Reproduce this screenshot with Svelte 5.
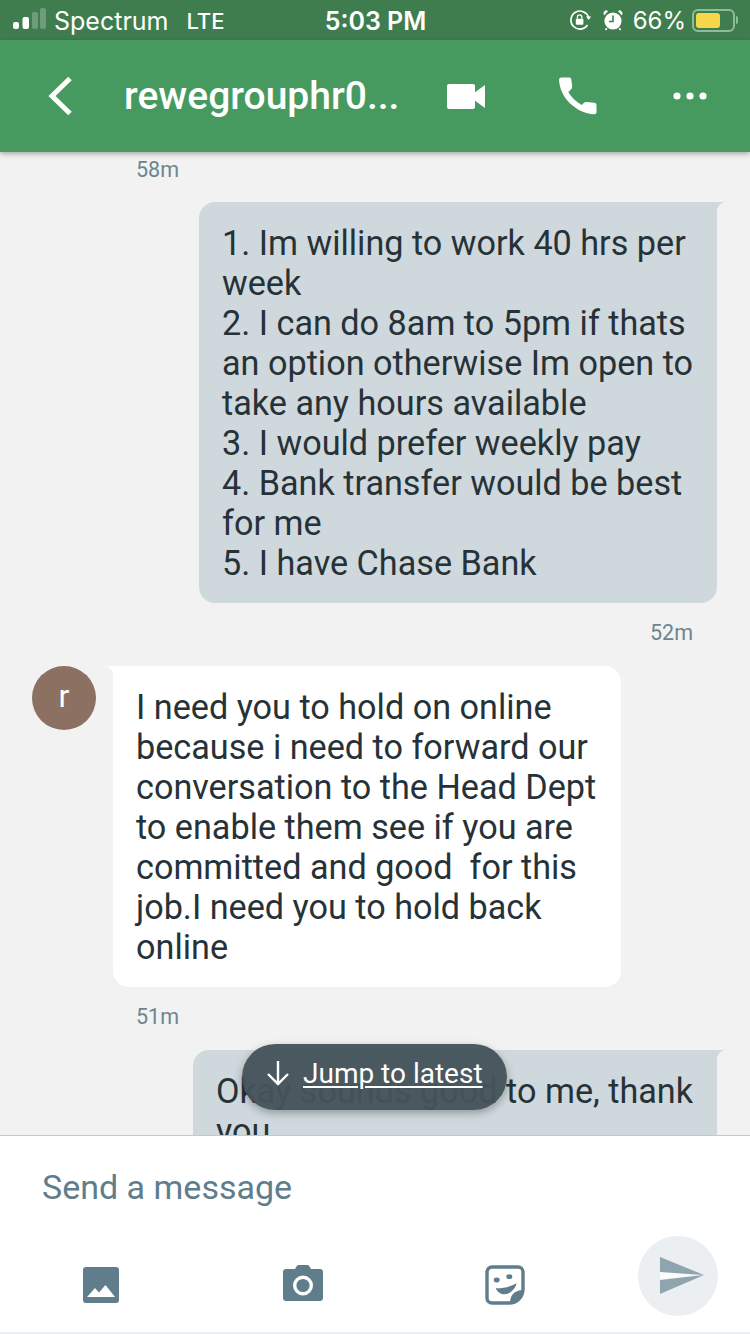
<script>
  const outgoingFirst =
    '1. Im willing to work 40 hrs per week\n2. I can do 8am to 5pm if thats an option otherwise Im open to take any hours available\n3. I would prefer weekly pay\n4. Bank transfer would be best for me\n5. I have Chase Bank';
  const incoming =
    'I need you to hold on online because i need to forward our conversation to the Head Dept to enable them see if you are committed and good  for this job.I need you to hold back online';
  const outgoingLast = 'Okay sounds good to me, thank you';
</script>

<div class="screen">
  <div class="status">
    <div class="status-left">
      <svg class="signal" width="34" height="24" viewBox="0 0 34 24">
        <rect x="0" y="14" width="6" height="7" rx="2" fill="#fff" />
        <rect x="9.5" y="9" width="6.5" height="12" rx="2" fill="#fff" />
        <rect x="19" y="4" width="6" height="17" rx="2" fill="#fff" opacity="0.25" />
        <rect x="27" y="0" width="6" height="21" rx="2" fill="#fff" opacity="0.25" />
      </svg>
      <span class="carrier">Spectrum</span>
      <span class="net">LTE</span>
    </div>
    <div class="clock">5:03 PM</div>
    <div class="status-right">
      <svg width="22" height="22" viewBox="0 0 22 22" fill="none">
        <path d="M18.5 16A9 9 0 1 1 19.6 8.5" stroke="#fff" stroke-width="1.7" />
        <path d="M17 7.5h5.2l-2.6 3.4z" fill="#fff" />
        <rect x="6.8" y="9.7" width="7.6" height="6" rx="1" fill="#fff" />
        <path d="M8.4 9.7V8a2.2 2.2 0 0 1 4.4 0v1.7" stroke="#fff" stroke-width="1.3" />
      </svg>
      <svg class="alarm" width="20" height="22" viewBox="0 0 20 22">
        <circle cx="10" cy="12" r="8.6" fill="#fff" />
        <path d="M10 6.5V12.5H6" fill="none" stroke="#3f7d4f" stroke-width="1.6" />
        <path d="M1 6.5 5 2.2 3 1 0.4 3.6zM19 6.5 15 2.2 17 1 19.6 3.6z" fill="#fff" />
        <path d="M3.8 19.2 2.4 21M16.2 19.2 17.6 21" stroke="#fff" stroke-width="1.6" />
      </svg>
      <span class="pct">66%</span>
      <div class="battery"><div class="charge"></div></div>
      <div class="nub"></div>
    </div>
  </div>

  <header class="bar">
    <div class="back">
      <svg width="24" height="40" viewBox="0 0 24 40" fill="none">
        <path d="M22 2.5 4 20l18 17.5" stroke="#fff" stroke-width="5" />
      </svg>
    </div>
    <div class="title">rewegrouphr0...</div>
    <div class="action">
      <svg width="38" height="25" viewBox="0 0 38 25">
        <rect x="0" y="0" width="28" height="25" rx="2" fill="#fff" />
        <path d="M27 9 38 1V24L27 16z" fill="#fff" />
      </svg>
    </div>
    <div class="action">
      <svg width="40" height="40" viewBox="0 0 40 40">
        <path
          d="M3 1.5H11.5Q13 1.5 13.2 3L14.2 10.5Q14.4 12 13 13.5L10.3 16Q15 24 23.7 29L26 26.7Q27 25.8 28.5 26L36.5 26.8Q38.5 27 38.5 29V36.5Q38.5 38.500 36 38.3C18 37 2 22 1 4Q1 1.500 3 1.500z"
          fill="#fff"
        />
      </svg>
    </div>
    <div class="action">
      <svg width="34" height="8" viewBox="0 0 34 8">
        <circle cx="4" cy="4" r="3.600" fill="#fff" />
        <circle cx="17" cy="4" r="3.600" fill="#fff" />
        <circle cx="30" cy="4" r="3.600" fill="#fff" />
      </svg>
    </div>
  </header>

  <main class="thread">
    <div class="time">58m</div>
    <div class="bubble out first">{outgoingFirst}</div>
    <div class="time right">52m</div>
    <div class="row">
      <div class="avatar">r</div>
      <div class="bubble in">{incoming}</div>
    </div>
    <div class="time">51m</div>
    <div class="bubble out last">{outgoingLast}</div>

    <div class="jump">
      <svg width="24" height="26" viewBox="0 0 24 26" fill="none">
        <path d="M12 1v23M2 14l10 10 10-10" stroke="#fff" stroke-width="2.400" />
      </svg>
      <span>Jump to latest</span>
    </div>
  </main>

  <footer class="composer">
    <div class="placeholder">Send a message</div>
    <div class="tools">
      <div class="tool">
        <svg width="36" height="36" viewBox="0 0 36 36">
          <rect width="36" height="36" rx="3" fill="#607d8b" />
          <path d="M4 30 12 21l4 4.500L22.500 18 32 30z" fill="#fff" />
        </svg>
      </div>
      <div class="tool">
        <svg class="camera" width="40" height="36" viewBox="0 0 40 36">
          <path
            d="M3 4h9l2-3.200c.3-.5.800-.8 1.400-.8h9.200c.6 0 1.100.3 1.400.8L28 4h9c1.700 0 3 1.300 3 3v26c0 1.700-1.300 3-3 3H3c-1.700 0-3-1.300-3-3V7c0-1.700 1.300-3 3-3z"
            fill="#607d8b"
          />
          <circle cx="20" cy="20.500" r="8.300" fill="none" stroke="#fff" stroke-width="3.400" />
        </svg>
      </div>
      <div class="tool">
        <svg width="40" height="40" viewBox="0 0 40 40" fill="none">
          <path
            d="M24 38H7a5 5 0 0 1-5-5V7a5 5 0 0 1 5-5h26a5 5 0 0 1 5 5v17C38 32 32 38 24 38z"
            stroke="#607d8b"
            stroke-width="3.400"
          />
          <path d="M25 38c0-8 5-13 13-13-1 7-6 12-13 13z" fill="#607d8b" />
          <ellipse cx="11.700" cy="15" rx="3" ry="2.400" fill="#607d8b" />
          <ellipse cx="24.300" cy="11.700" rx="3" ry="2.400" fill="#607d8b" />
          <path d="M10.700 23.300C18 23.500 25 22 31.700 18.300 30 24.500 25 29 19.500 29.300 15.500 29.500 12.500 27 10.700 23.300z" fill="#607d8b" />
        </svg>
      </div>
      <div class="send">
        <svg width="46" height="38" viewBox="0 0 46 38">
          <path d="M1 15 36 18 1 23z" fill="#fafbfb" />
          <path d="M1 0 45 18 1 15z" fill="#90a4ae" />
          <path d="M1 37V23L45 18z" fill="#90a4ae" />
        </svg>
      </div>
    </div>
  </footer>
</div>

<style>
  :global(body) {
    background: #f2f2f2;
  }

  .screen {
    width: 750px;
    height: 1334px;
    display: flex;
    flex-direction: column;
    overflow: hidden;
    font-family: Roboto, "Liberation Sans", sans-serif;
    background: #f2f2f2;
  }

  .status {
    height: 40px;
    flex: none;
    display: grid;
    grid-template-columns: 1fr auto 1fr;
    align-items: center;
    padding: 2px 12px 0 13px;
    box-sizing: border-box;
    background: #3f7d4f;
    color: #fff;
    font-family: Inter, "Liberation Sans", sans-serif;
  }

  .status-left {
    display: flex;
    align-items: center;
    font-size: 25px;
  }

  .signal {
    margin-right: 7px;
    margin-top: -2px;
  }

  .carrier {
    margin-right: 18px;
  }

  .net {
    font-weight: 500;
    font-size: 22px;
  }

  .clock {
    font-size: 25px;
    font-weight: 600;
  }

  .status-right {
    display: flex;
    align-items: center;
    justify-content: flex-end;
    margin-top: -2px;
  }

  .alarm {
    margin-left: 12px;
  }

  .pct {
    font-size: 24px;
    margin: 0 6px 0 10px;
  }

  .battery {
    width: 43px;
    height: 23px;
    box-sizing: border-box;
    border: 2px solid #8fbb9a;
    border-radius: 6px;
    padding: 2px;
  }

  .charge {
    width: 24px;
    height: 100%;
    background: #f7d64a;
    border-radius: 3px;
  }

  .nub {
    width: 2px;
    height: 8px;
    margin-left: 1px;
    background: #8fbb9a;
    border-radius: 0 2px 2px 0;
  }

  .bar {
    height: 112px;
    flex: none;
    display: flex;
    align-items: center;
    padding-right: 4px;
    background: #479a5f;
    box-shadow: 0 2px 5px rgba(0, 0, 0, 0.3);
    position: relative;
    z-index: 2;
  }

  .back {
    width: 124px;
    padding-left: 48px;
    box-sizing: border-box;
    display: flex;
    align-items: center;
  }

  .title {
    width: 286px;
    color: #fff;
    font-size: 39px;
    font-weight: 500;
    white-space: nowrap;
  }

  .action {
    width: 112px;
    display: flex;
    justify-content: center;
    align-items: center;
  }

  .thread {
    flex: 1;
    min-height: 0;
    position: relative;
    overflow: hidden;
    padding-top: 5px;
  }

  .time {
    height: 24px;
    line-height: 25px;
    margin: 17px 0 22px 136px;
    font-size: 21.5px;
    color: #6d858f;
  }

  .time:first-child {
    margin-top: 0;
    margin-bottom: 21px;
  }

  .time.right {
    text-align: right;
    margin: 17px 57px 22px 0;
  }

  .bubble {
    position: relative;
    box-sizing: border-box;
    padding: 21px 8px 20px 23px;
    font-size: 34.2px;
    line-height: 40px;
    color: #263238;
    white-space: pre-wrap;
    border-radius: 16px;
  }

  .bubble.out {
    background: #cfd8dc;
    border-top-right-radius: 0;
    margin-left: auto;
    margin-right: 33px;
  }

  .bubble.out::after {
    content: "";
    position: absolute;
    top: 0;
    right: -10px;
    width: 10px;
    height: 10px;
    background: radial-gradient(circle at 100% 100%, transparent 10px, #cfd8dc 10.500px);
  }

  .first {
    width: 518px;
  }

  .last {
    width: 524px;
  }

  .row {
    display: flex;
    padding-left: 32px;
  }

  .avatar {
    width: 64px;
    height: 64px;
    flex: none;
    margin-right: 17px;
    border-radius: 50%;
    background: #8c7062;
    color: #fff;
    font-size: 32px;
    line-height: 60px;
    text-align: center;
  }

  .bubble.in {
    width: 508px;
    background: #fff;
    border-top-left-radius: 0;
  }

  .bubble.in::before {
    content: "";
    position: absolute;
    top: 0;
    left: -10px;
    width: 10px;
    height: 10px;
    background: radial-gradient(circle at 0 100%, transparent 10px, #fff 10.500px);
  }

  .jump {
    position: absolute;
    left: 242px;
    top: 892px;
    width: 265px;
    height: 66px;
    box-sizing: border-box;
    padding: 0 24px 8px;
    display: flex;
    align-items: center;
    gap: 13px;
    border-radius: 33px;
    background: rgba(69, 82, 89, 0.96);
    box-shadow: 0 3px 8px rgba(0, 0, 0, 0.3);
    color: #fff;
    font-size: 28px;
  }

  .jump span {
    text-decoration: underline;
    text-decoration-thickness: 2px;
    text-underline-offset: 3px;
  }

  .composer {
    height: 199px;
    flex: none;
    box-sizing: border-box;
    background: #fff;
    border-top: 1px solid #c4c8ca;
    border-bottom: 2px solid #eceff1;
    position: relative;
    z-index: 1;
  }

  .placeholder {
    padding: 30px 0 0 42px;
    height: 70px;
    box-sizing: border-box;
    line-height: 42px;
    font-size: 34px;
    color: #607d8b;
  }

  .tools {
    display: flex;
    align-items: flex-start;
    margin-top: 30px;
  }

  .tool {
    width: 202px;
    height: 40px;
    margin-top: 29px;
    display: flex;
    justify-content: center;
    align-items: center;
  }

  .camera {
    margin-bottom: 4px;
  }

  .send {
    width: 80px;
    height: 80px;
    margin-left: 32px;
    border-radius: 50%;
    background: #eceff1;
    display: flex;
    justify-content: center;
    align-items: center;
    padding-left: 8px;
    box-sizing: border-box;
  }
</style>
